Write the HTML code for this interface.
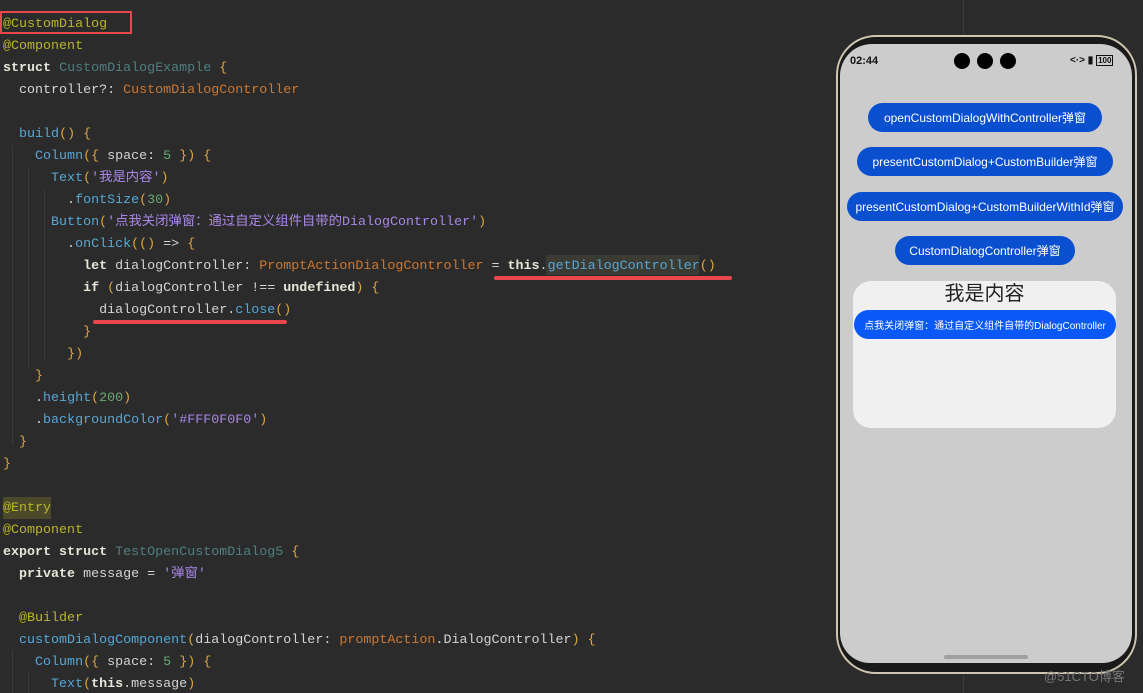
<!DOCTYPE html>
<html><head><meta charset="utf-8"><style>
html,body{margin:0;width:1143px;height:693px;overflow:hidden}
body{background:#2b2b2b;position:relative;font-family:"Liberation Mono","Noto Sans CJK SC",monospace}
.code{position:absolute;left:3px;top:14px;font-size:13.35px;line-height:22px;color:#d4d4d4}
.l{height:22px;white-space:pre}
.an{color:#bbb529}.kw{color:#e6e6d8;font-weight:bold}.cl{color:#4f7f80}.fn{color:#56a8d5}.st{color:#a987e8}.nm{color:#6aab73}.ty{color:#cc7832}.br{color:#e0a53b}
.guide{position:absolute;width:1px;background:#3a3a3a}
.vline{position:absolute;left:963px;width:1px;background:#3c3c3c}
.btn{position:absolute;background:#0a4fd0;color:#fff;border-radius:16px;font-family:"Liberation Sans","Noto Sans CJK SC",sans-serif;font-size:12px;display:flex;align-items:center;justify-content:center;height:29px;white-space:nowrap}
</style></head><body>
<div class="vline" style="top:0;height:40px"></div>
<div class="vline" style="top:670px;height:23px"></div>
<div class="guide" style="left:12px;top:145px;height:300px"></div>
<div class="guide" style="left:28px;top:168px;height:200px"></div>
<div class="guide" style="left:44px;top:190px;height:170px"></div>
<div class="guide" style="left:12px;top:650px;height:43px"></div>
<div class="guide" style="left:28px;top:672px;height:21px"></div>
<div style="position:absolute;left:0;top:11px;width:132px;height:23px;border:2px solid #e8484c;box-sizing:border-box"></div>
<div style="position:absolute;left:546px;top:255px;width:153px;height:20px;background:#3b3b33"></div>
<div style="position:absolute;left:3px;top:497px;width:48px;height:22px;background:#4a4a2a"></div>
<div style="position:absolute;left:494px;top:276px;width:238px;height:4px;background:#e8484c;border-radius:2px"></div>
<div style="position:absolute;left:93px;top:320px;width:194px;height:4px;background:#e8484c;border-radius:2px"></div>
<div class="code"><div class="l"><span class="an">@CustomDialog</span></div><div class="l"><span class="an">@Component</span></div><div class="l"><span class="kw">struct</span> <span class="cl">CustomDialogExample</span> <span class="br">{</span></div><div class="l">  controller?: <span class="ty">CustomDialogController</span></div><div class="l"> </div><div class="l">  <span class="fn">build</span><span class="br">()</span> <span class="br">{</span></div><div class="l">    <span class="fn">Column</span><span class="br">({</span> space: <span class="nm">5</span> <span class="br">})</span> <span class="br">{</span></div><div class="l">      <span class="fn">Text</span><span class="br">(</span><span class="st">'我是内容'</span><span class="br">)</span></div><div class="l">        .<span class="fn">fontSize</span><span class="br">(</span><span class="nm">30</span><span class="br">)</span></div><div class="l">      <span class="fn">Button</span><span class="br">(</span><span class="st">'点我关闭弹窗：通过自定义组件自带的DialogController'</span><span class="br">)</span></div><div class="l">        .<span class="fn">onClick</span><span class="br">(()</span> =&gt; <span class="br">{</span></div><div class="l">          <span class="kw">let</span> dialogController: <span class="ty">PromptActionDialogController</span> = <span class="kw">this</span>.<span class="fn">getDialogController</span><span class="br">()</span></div><div class="l">          <span class="kw">if</span> <span class="br">(</span>dialogController !== <span class="kw">undefined</span><span class="br">)</span> <span class="br">{</span></div><div class="l">            dialogController.<span class="fn">close</span><span class="br">()</span></div><div class="l">          <span class="br">}</span></div><div class="l">        <span class="br">})</span></div><div class="l">    <span class="br">}</span></div><div class="l">    .<span class="fn">height</span><span class="br">(</span><span class="nm">200</span><span class="br">)</span></div><div class="l">    .<span class="fn">backgroundColor</span><span class="br">(</span><span class="st">'#FFF0F0F0'</span><span class="br">)</span></div><div class="l">  <span class="br">}</span></div><div class="l"><span class="br">}</span></div><div class="l"> </div><div class="l"><span class="an">@Entry</span></div><div class="l"><span class="an">@Component</span></div><div class="l"><span class="kw">export struct</span> <span class="cl">TestOpenCustomDialog5</span> <span class="br">{</span></div><div class="l">  <span class="kw">private</span> message = <span class="st">'弹窗'</span></div><div class="l"> </div><div class="l">  <span class="an">@Builder</span></div><div class="l">  <span class="fn">customDialogComponent</span><span class="br">(</span>dialogController: <span class="ty">promptAction</span>.DialogController<span class="br">)</span> <span class="br">{</span></div><div class="l">    <span class="fn">Column</span><span class="br">({</span> space: <span class="nm">5</span> <span class="br">})</span> <span class="br">{</span></div><div class="l">      <span class="fn">Text</span><span class="br">(</span><span class="kw">this</span>.message<span class="br">)</span></div></div>

<div style="position:absolute;left:836px;top:35px;width:301px;height:639px;border-radius:40px;background:#1a1a1a;border:2px solid #cfc6b0;box-sizing:border-box"></div>
<div style="position:absolute;left:840px;top:44px;width:292px;height:619px;border-radius:32px 32px 30px 30px;background:#cccccc;overflow:hidden;font-family:'Liberation Sans','Noto Sans CJK SC',sans-serif">
  <div style="position:absolute;left:10px;top:11px;font-size:11px;color:#111;font-weight:bold">02:44</div>
  <div style="position:absolute;left:114px;top:9px;width:16px;height:16px;border-radius:50%;background:#000"></div>
  <div style="position:absolute;left:137px;top:9px;width:16px;height:16px;border-radius:50%;background:#000"></div>
  <div style="position:absolute;left:160px;top:9px;width:16px;height:16px;border-radius:50%;background:#000"></div>
  <div style="position:absolute;left:230px;top:11px;font-size:10px;color:#111;white-space:nowrap;font-weight:bold">&lt;·&gt; ▮ <span style="border:1px solid #111;font-size:8px;padding:0 1px">100</span></div>
  <div style="position:absolute;left:13px;top:237px;width:263px;height:147px;border-radius:18px;background:#f0f0f0"></div>
  <div style="position:absolute;left:13px;top:237px;width:263px;text-align:center;font-size:20px;color:#222;line-height:26px">我是内容</div>
  <div style="position:absolute;left:104px;top:611px;width:84px;height:4px;border-radius:2px;background:#a0a0a0"></div>
</div>
<div class="btn" style="left:868px;top:103px;width:234px">openCustomDialogWithController弹窗</div>
<div class="btn" style="left:857px;top:147px;width:256px">presentCustomDialog+CustomBuilder弹窗</div>
<div class="btn" style="left:847px;top:192px;width:276px">presentCustomDialog+CustomBuilderWithId弹窗</div>
<div class="btn" style="left:895px;top:236px;width:180px">CustomDialogController弹窗</div>
<div class="btn" style="left:854px;top:310px;width:262px;background:#0a59f7;font-size:10px">点我关闭弹窗：通过自定义组件自带的DialogController</div>
<div style="position:absolute;left:1044px;top:666px;font-family:'Liberation Sans','Noto Sans CJK SC',sans-serif;font-size:13px;color:#777">@51CTO博客</div>
</body></html>
